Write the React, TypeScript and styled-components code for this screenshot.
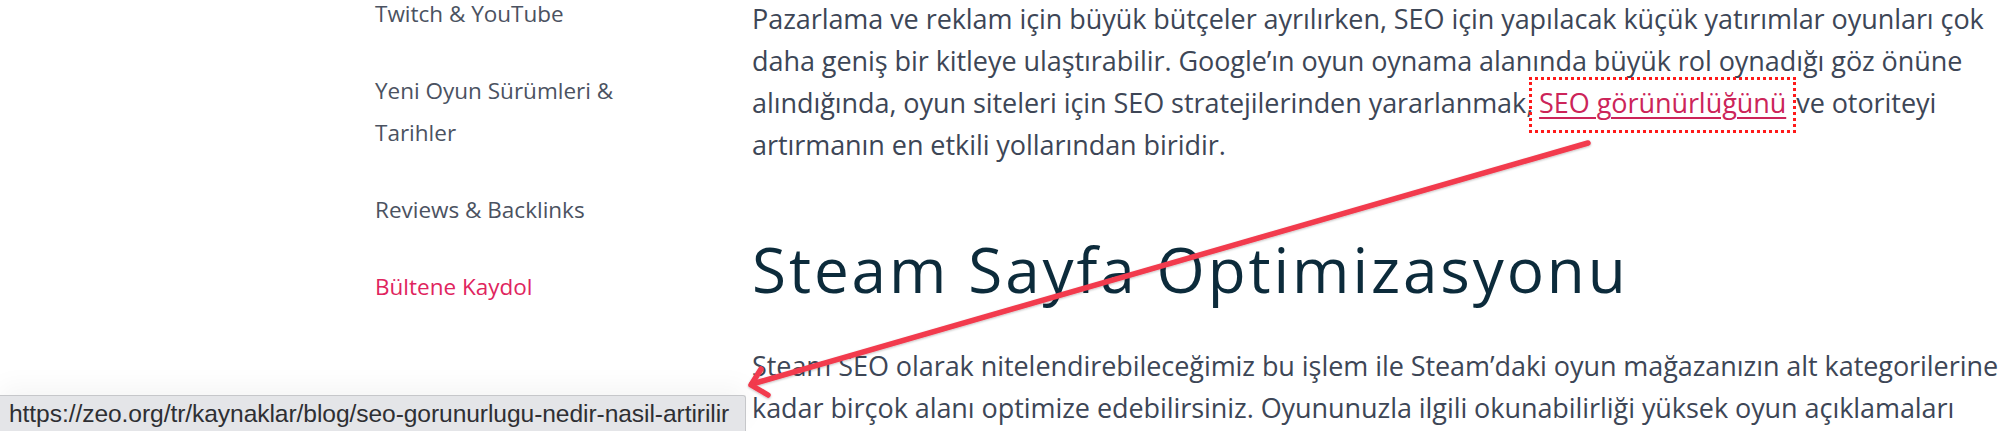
import React from 'react';
import styled, { createGlobalStyle } from 'styled-components';

const GlobalStyle = createGlobalStyle`
  html, body {
    margin: 0;
    padding: 0;
    background: #ffffff;
    overflow: hidden;
  }
  body {
    width: 1999px;
    height: 431px;
    font-family: 'Open Sans', 'Noto Sans', sans-serif;
  }
`;

const Page = styled.div`
  position: relative;
  width: 1999px;
  height: 431px;
  overflow: hidden;
  display: flex;
  padding-left: 375px;
  box-sizing: border-box;
`;

const Sidebar = styled.nav`
  width: 377px;
  flex-shrink: 0;
  display: flex;
  flex-direction: column;
  gap: 35px;
  margin-top: -7px;
`;

const NavItem = styled.a<{ $accent?: boolean }>`
  font-size: 22.5px;
  line-height: 42px;
  color: ${(p) => (p.$accent ? '#e0245e' : '#4b5261')};
  text-decoration: none;
`;

const Main = styled.main`
  flex: 1;
  margin-top: -2px;
  white-space: nowrap;
`;

const Paragraph = styled.p`
  margin: 0;
  font-size: 27px;
  line-height: 42px;
  color: #3d4656;
  letter-spacing: -0.06px;
`;

const Heading = styled.h2`
  margin: 63px 0 36px;
  font-family: 'Open Sans', 'Noto Sans', sans-serif;
  font-weight: 400;
  font-size: 62px;
  line-height: 80px;
  color: #0c2b3b;
  letter-spacing: 2.9px;
`;

const Highlight = styled.span`
  display: inline-block;
  height: 56px;
  box-sizing: border-box;
  margin: -5px 0 -9px -4px;
  padding-top: 2px;
  line-height: 42px;
  vertical-align: top;
  border: 3px dotted #ff1a1a;
`;

const Link = styled.a`
  color: #cc2459;
  text-decoration: underline;
  text-underline-offset: 4px;
  text-decoration-thickness: 2px;
`;

const StatusBar = styled.div`
  position: absolute;
  left: 0;
  bottom: 0;
  width: 746px;
  height: 36px;
  box-sizing: border-box;
  background: #e4e5e8;
  border-top: 1px solid #c6c7ca;
  border-right: 1px solid #c6c7ca;
  border-top-right-radius: 3px;
  box-shadow: 0 -10px 24px rgba(0, 0, 0, 0.04);
  display: flex;
  align-items: center;
  padding-left: 9px;
  font-family: 'Liberation Sans', Arial, sans-serif;
  font-size: 24.6px;
  letter-spacing: -0.08px;
  color: #2e2f33;
  white-space: nowrap;
  overflow: hidden;
`;

const ArrowLayer = styled.svg`
  position: absolute;
  left: 0;
  top: 0;
  pointer-events: none;
`;

const Arrow = () => (
  <ArrowLayer width="1999" height="431" viewBox="0 0 1999 431">
    <defs>
      <filter id="arrowShadow" x="-5%" y="-20%" width="110%" height="140%">
        <feDropShadow dx="0" dy="1" stdDeviation="1.2" floodColor="#000" floodOpacity="0.25" />
      </filter>
    </defs>
    <g
      stroke="#f23a4e"
      strokeWidth="5.5"
      strokeLinecap="round"
      strokeLinejoin="round"
      fill="none"
      filter="url(#arrowShadow)"
    >
      <line x1="1588" y1="143" x2="752" y2="384" />
      <polyline points="761,369 751,385 768,395" />
    </g>
  </ArrowLayer>
);

const App: React.FC = () => {
  return (
    <>
      <GlobalStyle />
      <Page>
        <Sidebar>
          <NavItem>Twitch &amp; YouTube</NavItem>
          <NavItem>
            Yeni Oyun Sürümleri &amp;
            <br />
            Tarihler
          </NavItem>
          <NavItem>Reviews &amp; Backlinks</NavItem>
          <NavItem $accent>Bültene Kaydol</NavItem>
        </Sidebar>
        <Main>
          <Paragraph>
            Pazarlama ve reklam için büyük bütçeler ayrılırken, SEO için yapılacak küçük yatırımlar oyunları çok
            <br />
            daha geniş bir kitleye ulaştırabilir. Google’ın oyun oynama alanında büyük rol oynadığı göz önüne
            <br />
            alındığında, oyun siteleri için SEO stratejilerinden yararlanmak,
            <Highlight>
              {'\u00a0'}
              <Link>SEO görünürlüğünü</Link>
              {'\u00a0'}
            </Highlight>
            ve otoriteyi
            <br />
            artırmanın en etkili yollarından biridir.
          </Paragraph>
          <Heading>Steam Sayfa Optimizasyonu</Heading>
          <Paragraph>
            Steam SEO olarak nitelendirebileceğimiz bu işlem ile Steam’daki oyun mağazanızın alt kategorilerine
            <br />
            kadar birçok alanı optimize edebilirsiniz. Oyununuzla ilgili okunabilirliği yüksek oyun açıklamaları
          </Paragraph>
        </Main>
        <Arrow />
        <StatusBar>https://zeo.org/tr/kaynaklar/blog/seo-gorunurlugu-nedir-nasil-artirilir</StatusBar>
      </Page>
    </>
  );
};

export default App;
